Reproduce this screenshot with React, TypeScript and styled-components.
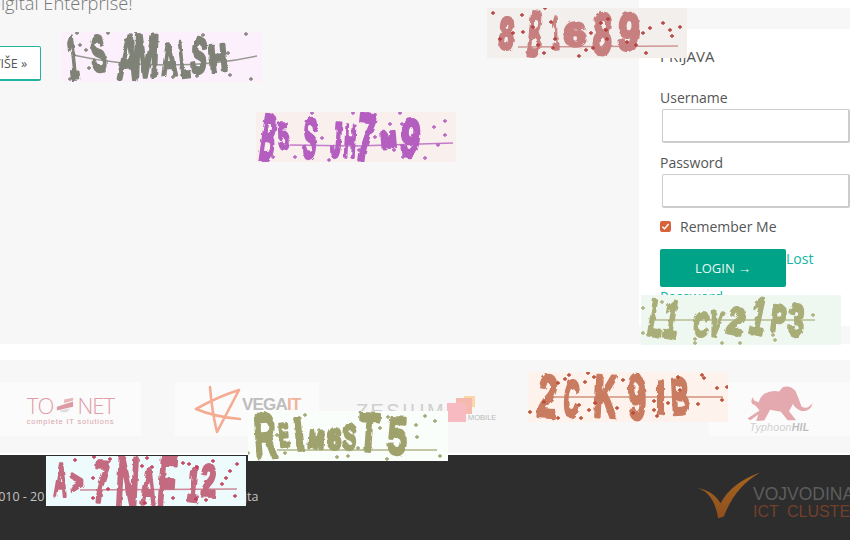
import React from "react";
import styled, { createGlobalStyle } from "styled-components";

const Global = createGlobalStyle`
  html, body { margin: 0; padding: 0; background: #fff; }
  body { width: 850px; height: 540px; overflow: hidden; font-family: "Open Sans", "Liberation Sans", sans-serif; color: #555; }
  #root { width: 850px; height: 540px; overflow: hidden; position: relative; }
`;

const Page = styled.div`
  width: 850px;
  height: 540px;
  display: flex;
  flex-direction: column;
  overflow: hidden;
`;
const Main = styled.section`
  height: 344px;
  display: grid;
  grid-template-columns: 639px 211px;
  background: #f7f7f7;
  flex: none;
`;
const Lead = styled.div`
  overflow: hidden;
  display: flex;
  flex-direction: column;
  align-items: flex-start;
`;
const Heading = styled.h2`
  margin: -11px 0 0 -12px;
  font-size: 18.3px;
  line-height: 27px;
  font-weight: 300;
  color: #777;
  white-space: nowrap;
`;
const MoreButton = styled.a`
  margin: 30px 0 0 -30px;
  height: 32px;
  box-sizing: content-box;
  display: flex;
  align-items: center;
  padding: 0 13px 0 22px;
  background: #fff;
  border: 1px solid #1fb5a0;
  border-bottom-width: 2px;
  border-radius: 2px;
  font-size: 12.5px;
  color: #555;
  white-space: nowrap;
`;
const Side = styled.aside`
  background: #fff;
  display: flex;
  flex-direction: column;
  padding-top: 8px;
`;
const Band = styled.div<{ $h: number }>`
  height: ${(p) => p.$h}px;
  background: #f7f7f7;
  flex: none;
`;
const LoginForm = styled.form`
  flex: 1;
  display: flex;
  flex-direction: column;
  align-items: flex-start;
  padding: 16px 0 0 21px;
  overflow: hidden;
`;
const FormTitle = styled.h3`
  margin: 0 0 21px;
  font-size: 15px;
  line-height: 22px;
  font-weight: 400;
  color: #555;
`;
const FieldLabel = styled.label`
  font-size: 14px;
  line-height: 20px;
  color: #555;
`;
const FieldInput = styled.input`
  box-sizing: border-box;
  width: 188px;
  height: 34px;
  margin: 1px 0 10px 2px;
  border: 1px solid #ccc;
  border-bottom-width: 2px;
  border-right-width: 2px;
  border-radius: 2px;
  background: #fff;
  flex: none;
`;
const RememberRow = styled.div`
  display: flex;
  align-items: center;
  gap: 9px;
  margin-top: -2px;
  height: 20px;
  font-size: 14px;
  color: #555;
`;
const CheckBox = styled.span`
  width: 11px;
  height: 11px;
  border-radius: 2px;
  background: #d8623a;
  display: flex;
  align-items: center;
  justify-content: center;
`;
const LoginRow = styled.div`
  margin-top: 13px;
  width: 185px;
  font-size: 14px;
  line-height: 20px;
  color: #12b5a5;
`;
const LoginButton = styled.button`
  float: left;
  width: 126px;
  height: 38px;
  border: 0;
  border-radius: 2px;
  background: #00a388;
  color: #e8f6f3;
  font-family: inherit;
  font-size: 13px;
  padding: 0;
`;
const Gap = styled.div`
  height: 16px;
  flex: none;
`;
const Partners = styled.section`
  height: 93px;
  flex: none;
  background: #f7f7f7;
  display: flex;
  align-items: flex-start;
  padding-top: 22px;
  box-sizing: border-box;
  overflow: hidden;
`;
const LogoCard = styled.div<{ $w: number; $ml?: number }>`
  width: ${(p) => p.$w}px;
  margin-left: ${(p) => p.$ml ?? 0}px;
  height: 54px;
  flex: none;
  background: #fbfbfb;
  display: flex;
  align-items: center;
  justify-content: center;
  font-family: "Liberation Sans", sans-serif;
`;
const ToNet = styled.div`
  display: flex;
  flex-direction: column;
  align-items: center;
  color: #e29ca7;
`;
const ToNetName = styled.div`
  display: flex;
  align-items: center;
  gap: 3px;
  font-family: "Open Sans", sans-serif;
  font-size: 22px;
  line-height: 24px;
  font-weight: 300;
  letter-spacing: -1px;
`;
const ToNetTag = styled.div`
  font-size: 7.5px;
  line-height: 9px;
  letter-spacing: 0.8px;
  color: #d9a4ac;
`;
const VegaMark = styled.div`
  display: flex;
  align-items: center;
  width: 100%;
`;
const VegaName = styled.span`
  font-size: 17px;
  font-weight: 700;
  color: #bdbdbd;
  letter-spacing: -0.8px;
  margin: -8px 0 0 -3px;
`;
const VegaIt = styled.span`
  color: #efb49b;
`;
const Zesium = styled.div`
  margin-left: 37px;
  margin-top: 16px;
  width: 139px;
  flex: none;
  display: flex;
  align-items: flex-start;
  position: relative;
  font-family: "Liberation Sans", sans-serif;
`;
const ZesiumName = styled.span`
  font-size: 20px;
  line-height: 26px;
  letter-spacing: 2.4px;
  font-weight: 400;
  color: #cfcfcf;
  width: 91px;
  flex: none;
`;
const MobileTag = styled.span`
  font-size: 7.5px;
  line-height: 10px;
  color: #b9b9b9;
  margin: 15px 0 0 21px;
`;
const SquareSet = styled.svg`
  position: absolute;
  left: 91px;
  top: -2px;
`;
const TyphoonInner = styled.div`
  display: flex;
  flex-direction: column;
  align-items: center;
`;
const TyphoonName = styled.div`
  margin-top: 1px;
  font-size: 10.5px;
  line-height: 11px;
  font-style: italic;
  color: #cfcfcf;
  letter-spacing: 0.3px;
`;
const TyphoonBold = styled.b`
  color: #bfbfbf;
`;
const Rule = styled.div`
  height: 2px;
  flex: none;
  background: #fff;
`;
const Footer = styled.footer`
  flex: 1;
  background: #2d2d2d;
  display: flex;
  align-items: flex-start;
  justify-content: space-between;
  overflow: hidden;
`;
const Copy = styled.p`
  margin: 33px 0 0 -9px;
  font-size: 12.5px;
  line-height: 18px;
  color: #c2c2c2;
  white-space: nowrap;
`;
const Cluster = styled.div`
  display: flex;
  align-items: flex-start;
  margin: 15px -30px 0 0;
  width: 185px;
  flex: none;
  font-family: "Liberation Sans", sans-serif;
`;
const ClusterText = styled.div`
  margin: 17px 0 0 -10px;
  white-space: nowrap;
`;
const ClusterTop = styled.div`
  font-size: 17.5px;
  line-height: 15px;
  color: #5d5d5d;
`;
const ClusterBottom = styled.div`
  margin-top: 1px;
  font-size: 16px;
  line-height: 17px;
  color: #73402c;
  word-spacing: 4px;
`;
const CaptchaFrame = styled.svg<{ $x: number; $y: number; $bg: string }>`
  position: absolute;
  left: ${(p) => p.$x}px;
  top: ${(p) => p.$y}px;
  background: ${(p) => p.$bg};
  display: block;
`;
const CaptchaGlyph = styled.text<{ $ink: string }>`
  font-family: "Liberation Sans", sans-serif;
  font-weight: 700;
  fill: ${(p) => p.$ink};
  stroke: ${(p) => p.$ink};
  stroke-width: 3.6px;
  stroke-linejoin: round;
`;

type Glyph = [string, number, number, number, number, number?];
interface CaptchaData {
  x: number;
  y: number;
  bg: string;
  ink: string;
  dot: string;
  line: string;
  glyphs: Glyph[];
  dots: [number, number][];
}

const captchas: CaptchaData[] = [
  {
    x: 62, y: 32, bg: "#fcf0fc", ink: "#7f8276", dot: "#7f8276",
    line: "M11 23 Q55 33 105 33 T195 24",
    glyphs: [
      ["1", 6, 16, 4, 47, -6], ["S", 29, 44, 4, 39, -6], ["A", 56, 77, 3, 47, 3], ["M", 71, 97, 3, 45, 2],
      ["A", 99, 115, 13, 43, -3], ["L", 117, 127, 9, 45, -6], ["S", 129, 145, 7, 41, 5], ["H", 147, 165, 13, 39, -5],
    ],
    dots: [[18,13],[24,18],[27,36],[8,47],[42,39],[40,21],[46,1],[111,45],[120,43],[135,44],[141,3],[166,21],[168,43],[184,2],[189,47],[85,30],[15,1]],
  },
  {
    x: 256, y: 112, bg: "#f9f0ee", ink: "#b45fc0", dot: "#b45fc0",
    line: "M34 33 L100 34 L197 31",
    glyphs: [
      ["B", 5, 20, 3, 49, 8], ["5", 22, 33, 12, 37, -4], ["S", 47, 61, 7, 46, 5], ["J", 75, 86, 11, 45, 4],
      ["H", 88, 100, 13, 45, 3], ["7", 101, 119, 2, 49, 6], ["M", 125, 140, 20, 35, -5], ["9", 145, 164, 8, 44, 6],
    ],
    dots: [[56,1],[97,1],[144,1],[189,9],[178,15],[189,23],[182,33],[169,46],[147,45],[138,38],[134,12],[146,12],[119,25],[66,26],[17,45],[39,45],[73,48],[103,38]],
  },
  {
    x: 487, y: 8, bg: "#f3efed", ink: "#c77f7f", dot: "#b53c3c",
    line: "M31 39 L191 38",
    glyphs: [
      ["8", 12, 27, 10, 41, 4], ["B", 41, 55, 3, 48, 6], ["1", 66, 72, 9, 41, -2], ["6", 77, 99, 15, 38, 0],
      ["8", 106, 125, 6, 46, 3], ["9", 131, 152, 6, 42, 6],
    ],
    dots: [[6,5],[35,7],[58,0],[64,14],[26,25],[13,31],[36,24],[46,19],[51,37],[68,31],[66,40],[57,45],[92,48],[99,42],[106,40],[104,25],[114,15],[119,22],[121,11],[120,31],[140,34],[149,37],[159,45],[156,25],[163,20],[176,15],[193,19],[183,22],[185,28]],
  },
  {
    x: 641, y: 295, bg: "#eef7f0", ink: "#a9ad78", dot: "#a9ad78",
    line: "M9 25 L174 25",
    glyphs: [
      ["L", 8, 23, 6, 41, 10], ["1", 23, 38, 6, 42, 10], ["C", 53, 68, 18, 41, 8], ["V", 69, 81, 17, 41, 12],
      ["2", 87, 103, 13, 39, 12], ["1", 110, 125, 3, 39, 12], ["P", 130, 145, 11, 36, 6], ["3", 148, 163, 10, 41, 4],
    ],
    dots: [[2,13],[2,38],[54,44],[54,48],[81,48],[99,48],[132,40],[134,45],[172,20],[21,7]],
  },
  {
    x: 528, y: 372, bg: "#fdf2ec", ink: "#c97b60", dot: "#b84a30",
    line: "M24 25 L195 25",
    glyphs: [
      ["2", 10, 29, 4, 45, 5], ["C", 36, 51, 9, 44, 5], ["K", 66, 89, 4, 45, 3], ["9", 100, 118, 3, 47, -2],
      ["I", 128, 137, 9, 42, 0], ["B", 143, 161, 7, 42, -3],
    ],
    dots: [[2,40],[30,46],[53,46],[61,38],[67,31],[51,33],[16,30],[30,11],[37,7],[41,3],[57,10],[60,1],[66,5],[95,8],[89,36],[105,41],[126,29],[126,38],[129,44],[140,31],[150,5],[152,18],[170,32],[174,3],[176,6],[189,16],[194,28],[199,15]],
  },
  {
    x: 248, y: 411, bg: "#fafefa", ink: "#9fa26c", dot: "#9fa26c",
    line: "M29 39 L189 39",
    glyphs: [
      ["R", 6, 28, 3, 46, -4], ["E", 31, 41, 13, 35, -5], ["I", 46, 56, 7, 39, -6], ["M", 60, 76, 20, 37, 4],
      ["6", 80, 93, 18, 38, 2], ["S", 95, 108, 14, 38, 3], ["T", 111, 131, 3, 40, 4], ["5", 140, 159, 7, 43, 3],
    ],
    dots: [[57,4],[29,24],[37,42],[89,46],[100,45],[140,6],[132,17],[120,17],[110,37],[168,14],[169,26],[177,5],[187,10],[139,48],[192,45],[0,42]],
  },
  {
    x: 46, y: 456, bg: "#eefbfd", ink: "#c46b80", dot: "#c23a5a",
    line: "M34 34 L191 33",
    glyphs: [
      ["A", 8, 21, 8, 40, 2], [">", 25, 37, 16, 37, 0], ["7", 48, 63, 5, 46, 4], ["N", 70, 93, 2, 50, 3],
      ["A", 95, 110, 13, 48, 2], ["F", 112, 130, 0, 50, 4], ["1", 142, 153, 11, 45, 6], ["2", 155, 170, 9, 40, 2],
    ],
    dots: [[29,4],[48,1],[64,3],[101,2],[47,22],[62,33],[47,42],[99,47],[127,42],[137,7],[143,8],[151,11],[167,5],[184,15],[191,8],[180,22],[176,28],[189,40],[150,43],[160,44],[106,11],[96,10]],
  },
];

function Captcha({ data, id }: { data: CaptchaData; id: string }) {
  return (
    <CaptchaFrame $x={data.x} $y={data.y} $bg={data.bg} width={200} height={50} viewBox="0 0 200 50">
      <defs>
        <filter id={id} x="-5%" y="-5%" width="110%" height="110%">
          <feTurbulence type="fractalNoise" baseFrequency="0.14" numOctaves="2" seed="4" />
          <feDisplacementMap in="SourceGraphic" scale="4" />
          <feGaussianBlur stdDeviation="0.4" />
        </filter>
      </defs>
      <path d={data.line} fill="none" stroke={data.ink} strokeWidth={1.3} opacity={0.8} />
      <g filter={`url(#${id})`}>
        {data.glyphs.map(([ch, x0, x1, y0, y1, rot], i) => {
          const size = (y1 - y0) / 0.69;
          const cx = (x0 + x1) / 2;
          const cy = (y0 + y1) / 2;
          return (
            <CaptchaGlyph
              key={i}
              $ink={data.ink}
              x={x0}
              y={y1}
              fontSize={size}
              textLength={x1 - x0}
              lengthAdjust="spacingAndGlyphs"
              transform={`rotate(${rot ?? 0} ${cx} ${cy})`}
            >
              {ch}
            </CaptchaGlyph>
          );
        })}
      </g>
      {data.dots.map(([x, y], i) => (
        <path key={i} d={`M${x - 2} ${y}H${x + 2}M${x} ${y - 2}V${y + 2}`} stroke={data.dot} strokeWidth={1.3} />
      ))}
    </CaptchaFrame>
  );
}

export default function App() {
  return (
    <Page>
      <Global />
      <Main>
        <Lead>
          <Heading>Digital Enterprise!</Heading>
          <MoreButton>VIŠE »</MoreButton>
        </Lead>
        <Side>
          <Band $h={21} />
          <LoginForm>
            <FormTitle>PRIJAVA</FormTitle>
            <FieldLabel>Username</FieldLabel>
            <FieldInput />
            <FieldLabel>Password</FieldLabel>
            <FieldInput />
            <RememberRow>
              <CheckBox>
                <svg width="9" height="9" viewBox="0 0 8 8">
                  <path d="M1.2 4.2 3.2 6 6.8 1.8" fill="none" stroke="#fff" strokeWidth="1.3" />
                </svg>
              </CheckBox>
              Remember Me
            </RememberRow>
            <LoginRow>
              <LoginButton type="button">LOGIN →</LoginButton>
              Lost Password
            </LoginRow>
          </LoginForm>
          <Band $h={18} />
        </Side>
      </Main>
      <Gap />
      <Partners>
        <LogoCard $w={141}>
          <ToNet>
            <ToNetName>
              TO
              <svg width="18" height="16" viewBox="0 0 20 16">
                <path d="M1 10 19 4V10L1 14Z" fill="#dc9aa2" />
                <path d="M9 2 19 0V3L9 6Z" fill="#e6b5bb" />
                <path d="M4 14 16 12 12 16H6Z" fill="#ddd" />
              </svg>
              NET
            </ToNetName>
            <ToNetTag>complete IT solutions</ToNetTag>
          </ToNet>
        </LogoCard>
        <LogoCard $w={144} $ml={34}>
          <VegaMark>
            <svg width="70" height="54" viewBox="0 0 70 54">
              <path d="M35 5Q37 30 42 50L64 8Q42 15 21 27Q40 35 65 37" fill="none" stroke="#f4ab92" strokeWidth="2.6" strokeLinejoin="round" strokeLinecap="round" />
            </svg>
            <VegaName>
              VEGA<VegaIt>IT</VegaIt>
            </VegaName>
          </VegaMark>
        </LogoCard>
        <Zesium>
          <ZesiumName>ZESIUM</ZesiumName>
          <MobileTag>MOBILE</MobileTag>
          <SquareSet width="32" height="30" viewBox="0 0 32 30">
            <rect x="17" y="0" width="11" height="11" fill="#fbd7a8" />
            <rect x="9" y="2" width="16" height="16" fill="#f5b9ae" />
            <rect x="0" y="7" width="19" height="19" fill="#f6bac0" />
          </SquareSet>
        </Zesium>
        <LogoCard $w={141} $ml={214}>
          <TyphoonInner>
            <svg width="68" height="36" viewBox="890 70 205 110">
              <path
                d="M893 172L930 148Q918 130 908 128Q900 118 912 105Q906 120 928 122Q932 105 945 97Q965 85 990 90L1000 78Q1020 68 1040 88Q1050 112 1058 135Q1075 148 1092 125Q1088 150 1060 150Q1040 144 1032 128L1020 150L1042 178L1016 178L995 152L962 146L945 178L920 180L926 160L902 178Z"
                fill="#e4a9ae"
              />
            </svg>
            <TyphoonName>
              Typhoon<TyphoonBold>HIL</TyphoonBold>
            </TyphoonName>
          </TyphoonInner>
        </LogoCard>
      </Partners>
      <Rule />
      <Footer>
        <Copy>2010 - 2018 Vojvodina ICT Cluster · Mapa sajta</Copy>
        <Cluster>
          <svg width="68" height="50" viewBox="735 325 205 150">
            <defs>
              <linearGradient id="clusterTick" x1="0" y1="0" x2="0" y2="1">
                <stop offset="0" stopColor="#a8661f" />
                <stop offset="1" stopColor="#8e4e1e" />
              </linearGradient>
            </defs>
            <path d="M735 378Q790 385 805 470L822 465Q855 375 932 332Q845 362 812 425Q790 385 735 378Z" fill="url(#clusterTick)" />
          </svg>
          <ClusterText>
            <ClusterTop>VOJVODINA</ClusterTop>
            <ClusterBottom>ICT CLUSTER</ClusterBottom>
          </ClusterText>
        </Cluster>
      </Footer>
      {captchas.map((c, i) => (
        <Captcha key={i} data={c} id={`captcha-${i}`} />
      ))}
    </Page>
  );
}
